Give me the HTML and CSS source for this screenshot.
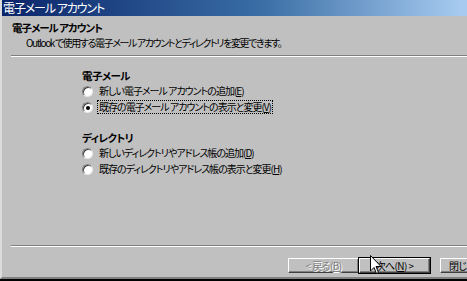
FILE: index.html
```html
<!DOCTYPE html>
<html lang="ja">
<head>
    <meta charset="UTF-8">
    <title>電子メール アカウント</title>
    <link rel="stylesheet" href="styles.css">
</head>
<body>

    <div class="window">
        <!-- Title bar -->
        <div class="titlebar">電子メール アカウント</div>

        <!-- Header -->
        <div class="header">
            <h1>電子メール アカウント</h1>
            <p>Outlook で使用する電子メール アカウントとディレクトリを変更できます。</p>
        </div>
        <div class="etched"></div>

        <div class="content">
            <div class="group">
                <h2>電子メール</h2>
                <label class="radio"><span class="dot"></span><span class="text">新しい電子メール アカウントの追加(<u>E</u>)</span></label>
                <label class="radio checked"><span class="dot"></span><span class="text focus">既存の電子メール アカウントの表示と変更(<u>V</u>)</span></label>
            </div>
            <div class="group">
                <h2>ディレクトリ</h2>
                <label class="radio"><span class="dot"></span><span class="text">新しいディレクトリやアドレス帳の追加(<u>D</u>)</span></label>
                <label class="radio"><span class="dot"></span><span class="text">既存のディレクトリやアドレス帳の表示と変更(<u>H</u>)</span></label>
            </div>
        </div>

        <div class="etched"></div>
        <div class="buttons">
            <button class="btn" disabled>&lt; 戻る(<u>B</u>)</button>
            <button class="btn default">次へ(<u>N</u>) &gt;</button>
            <button class="btn close">閉じる</button>
        </div>

        <!-- mouse pointer over the Next button -->
        <svg class="cursor" width="12" height="20" viewBox="0 0 12 20">
            <path d="M0.5 0.5 L0.5 16 L4 12.5 L6.5 18.5 L8.5 17.5 L6 11.5 L11 11.5 Z" fill="#fff" stroke="#000" stroke-width="1"/>
        </svg>
    </div>

</body>
</html>
```

FILE: styles.css
```css
body {
    margin: 0;
    padding: 0;
    width: 467px;
    height: 281px;
    overflow: hidden;
    background-color: #fff;
    font-family: "Noto Sans CJK JP", "Liberation Sans", sans-serif;
    font-size: 10px;
    font-feature-settings: "palt";
    color: #000;
}
.window {
    position: relative;
    width: 520px;
    height: 277px;
    background-color: #c0c0c0;
    border-left: 2px solid #dcdcdc;
    border-bottom: 2px solid #808080;
    box-shadow: 0 2px 0 #000;
}
.titlebar {
    height: 16px;
    line-height: 15px;
    padding-left: 1px;
    color: #fff;
    font-size: 12px;
    letter-spacing: -1.1px;
    background: linear-gradient(to right, #0a246a 0%, #3a6ea5 50%, #a6caf0 88%);
}
.header {
    padding: 5px 0 0 10px;
    height: 34px;
}
.header h1 {
    margin: 0;
    font-size: 10.5px;
    font-weight: bold;
    line-height: 14px;
    letter-spacing: -1px;
}
.header p {
    margin: 0 0 0 14px;
    line-height: 15px;
    letter-spacing: -1.4px;
}
.etched {
    margin-left: 9px;
    height: 1px;
    border-top: 1px solid #808080;
    background-color: #fff;
}
.content {
    height: 188px;
    padding: 12px 0 0 80px;
    box-sizing: border-box;
}
.group {
    margin-bottom: 16px;
}
.group h2 {
    margin: 0;
    font-size: 10.5px;
    font-weight: bold;
    line-height: 14px;
    letter-spacing: -0.6px;
}
.radio {
    display: flex;
    align-items: center;
    height: 16px;
}
.radio .dot {
    position: relative;
    width: 9px;
    height: 9px;
    border-radius: 50%;
    background-color: #fff;
    border: 1px solid #808080;
    border-right-color: #e8e8e8;
    border-bottom-color: #e8e8e8;
    box-shadow: inset 1px 1px 0 #404040;
    margin-right: 4px;
}
.radio.checked .dot::after {
    content: "";
    position: absolute;
    left: 3px;
    top: 3px;
    width: 4px;
    height: 4px;
    border-radius: 50%;
    background-color: #000;
}
.radio .text {
    padding: 0 1px;
    line-height: 12px;
    letter-spacing: -1px;
    border: 1px dotted transparent;
}
.radio .text.focus {
    border-color: #000;
}
.buttons {
    display: flex;
    padding: 11px 0 0 286px;
}
.btn {
    width: 71px;
    height: 15px;
    padding: 0;
    font-family: inherit;
    font-size: 10px;
    font-feature-settings: "palt";
    letter-spacing: -0.6px;
    line-height: 11px;
    background-color: #c0c0c0;
    color: #000;
    border: 1px solid;
    border-color: #fff #404040 #404040 #fff;
    box-shadow: inset -1px -1px 0 #808080;
}
.btn[disabled] {
    color: #808080;
    text-shadow: 1px 1px 0 #fff;
}
.btn.default {
    outline: 1px solid #000;
}
.btn.close {
    margin-left: 10px;
    text-align: left;
    padding-left: 8px;
}
.cursor {
    position: absolute;
    left: 368px;
    top: 255px;
}
```
